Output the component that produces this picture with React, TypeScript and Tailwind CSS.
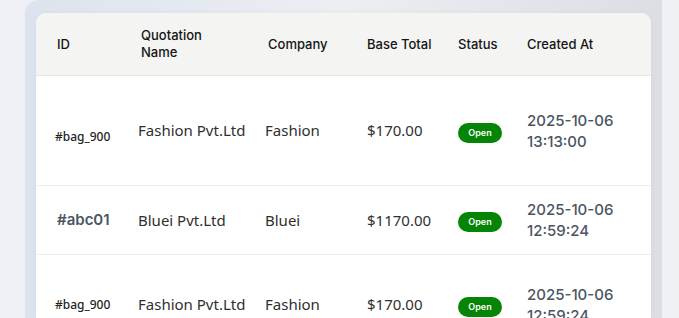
const rows = [
  { id: '#bag_900', idBig: false, name: 'Fashion Pvt.Ltd', company: 'Fashion', total: '$170.00', date: '2025-10-06', time: '13:13:00', h: 'h-[110px]', idShift: 'mt-[12px]' },
  { id: '#abc01', idBig: true, name: 'Bluei Pvt.Ltd', company: 'Bluei', total: '$1170.00', date: '2025-10-06', time: '12:59:24', h: 'h-[69px]', idShift: '' },
  { id: '#bag_900', idBig: false, name: 'Fashion Pvt.Ltd', company: 'Fashion', total: '$170.00', date: '2025-10-06', time: '12:59:24', h: 'h-[100px]', idShift: '' },
]

const cols = 'grid grid-cols-[84px_127px_99px_91px_69px_1fr] pl-[21px]'

export default function App() {
  return (
    <div className="h-[318px] w-[679px] overflow-hidden bg-gradient-to-r from-[#eef0f6] to-[#eef0f3] pl-[25px] pr-[17px]">
      <div className="h-full rounded-tl-[14px] bg-gradient-to-r from-[#dde3ee] via-[#eceef2] to-[#dcdee4] px-[11px] pt-[13px]">
        <div className="h-full overflow-hidden rounded-t-[10px] bg-white shadow-[0_0_6px_rgba(0,0,0,0.04)]">
          <div className={`${cols} h-[63px] items-center border-b border-[#e8e8e8] bg-[#f4f4f3] font-['Inter',sans-serif] text-[13px] font-medium leading-[17px] text-[#151515]`}>
            <div>ID</div>
            <div className="max-w-[70px]">Quotation Name</div>
            <div>Company</div>
            <div>Base Total</div>
            <div>Status</div>
            <div>Created At</div>
          </div>
          {rows.map((r, i) => (
            <div key={i} className={`${cols} ${r.h} items-center border-b border-[#eeeeee] font-['Noto_Sans',sans-serif] text-[15px] text-[#2f2f2f]`}>
              <div
                className={
                  r.idBig
                    ? "font-['Inter',sans-serif] text-[15px] font-semibold text-[#4b5563]"
                    : `-ml-[2px] ${r.idShift} text-[12px] font-medium text-[#222]`
                }
              >
                {r.id}
              </div>
              <div className="-ml-[3px]">{r.name}</div>
              <div className="-ml-[3px]">{r.company}</div>
              <div>{r.total}</div>
              <div className="pt-[4px]">
                <span className="flex h-[20px] w-[44px] items-center justify-center rounded-full bg-[#058405] font-['Inter',sans-serif] text-[9px] font-semibold text-white">
                  Open
                </span>
              </div>
              <div className="font-['Inter',sans-serif] text-[15px] font-medium leading-[21px] text-[#4b5563]">
                <div>{r.date}</div>
                <div>{r.time}</div>
              </div>
            </div>
          ))}
        </div>
      </div>
    </div>
  )
}
